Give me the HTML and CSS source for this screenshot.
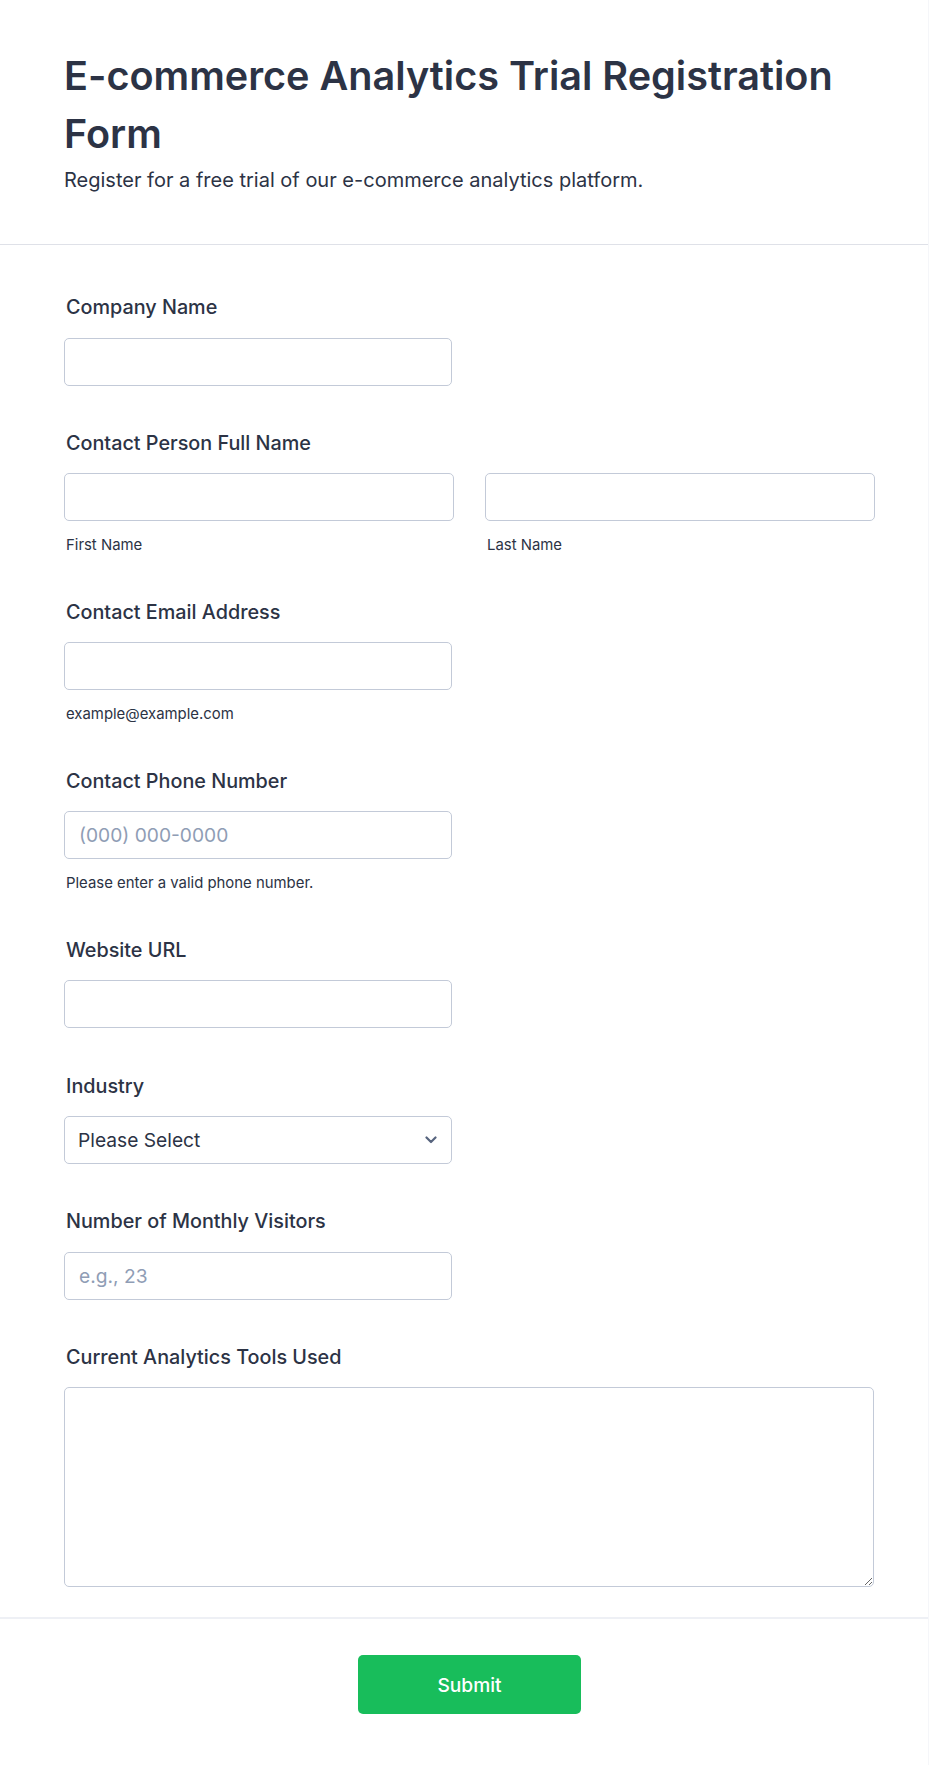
FILE: index.html
```html
<!DOCTYPE html>
<html lang="en">
<head>
<meta charset="utf-8">
<title>E-commerce Analytics Trial Registration Form</title>
<link rel="stylesheet" href="styles.css">
</head>
<body>
<div class="page">
  <header class="form-header">
    <h1 class="title">E-commerce Analytics Trial Registration Form</h1>
    <p class="subtitle">Register for a free trial of our e-commerce analytics platform.</p>
  </header>
  <form class="form-body">
    <div class="field">
      <label class="label">Company Name</label>
      <input class="input half" type="text">
    </div>
    <div class="field">
      <label class="label">Contact Person Full Name</label>
      <div class="name-row">
        <div class="name-col">
          <input class="input" type="text">
          <span class="sublabel">First Name</span>
        </div>
        <div class="name-col">
          <input class="input" type="text">
          <span class="sublabel">Last Name</span>
        </div>
      </div>
    </div>
    <div class="field">
      <label class="label">Contact Email Address</label>
      <input class="input half" type="email">
      <span class="sublabel">example@example.com</span>
    </div>
    <div class="field">
      <label class="label">Contact Phone Number</label>
      <input class="input half" type="tel" placeholder="(000) 000-0000">
      <span class="sublabel">Please enter a valid phone number.</span>
    </div>
    <div class="field">
      <label class="label">Website URL</label>
      <input class="input half" type="text">
    </div>
    <div class="field">
      <label class="label">Industry</label>
      <div class="select-wrap half">
        <div class="select">Please Select</div>
        <svg class="chev" width="12" height="8" viewBox="0 0 12 8"><path d="M1.5 1.5 L6 6 L10.5 1.5" fill="none" stroke="#57647e" stroke-width="2.2" stroke-linecap="round" stroke-linejoin="round"/></svg>
      </div>
    </div>
    <div class="field">
      <label class="label">Number of Monthly Visitors</label>
      <input class="input half" type="text" placeholder="e.g., 23">
    </div>
    <div class="field last">
      <label class="label">Current Analytics Tools Used</label>
      <textarea class="textarea"></textarea>
    </div>
  </form>
  <footer class="form-footer">
    <button class="submit" type="button">Submit</button>
  </footer>
</div>
</body>
</html>
```
FILE: styles.css
```css
* { box-sizing: border-box; }
html, body { margin: 0; padding: 0; background: #ffffff; }
body {
  font-family: Inter, "Noto Sans", "Liberation Sans", sans-serif;
  color: #2c3345;
}
.page {
  width: 929px;
  min-height: 1765px;
  border-right: 1px solid #f5f6f9;
}
.form-header {
  padding: 48px 64px 51px 64px;
  border-bottom: 1px solid #dfe1e8;
}
.title {
  margin: 0;
  font-size: 39.6px;
  line-height: 57.6px;
  font-weight: 600;
  color: #2c3345;
  letter-spacing: 0;
}
.subtitle {
  margin: 4px 0 0 0;
  font-size: 20px;
  line-height: 26px;
  font-weight: 400;
  color: #2c3345;
}
.form-body {
  padding: 48px 54px 30px 64px;
  display: flex;
  flex-direction: column;
  gap: 43.2px;
}
.field {
  display: flex;
  flex-direction: column;
  align-items: flex-start;
}
.label {
  display: block;
  padding-left: 2px;
  font-size: 19.8px;
  line-height: 28.8px;
  font-weight: 500;
  color: #2c3345;
  margin-bottom: 15.6px;
}
.input {
  display: block;
  width: 100%;
  height: 48px;
  border: 1px solid #c3cad8;
  border-radius: 5px;
  background: #fff;
  font-family: inherit;
  font-size: 19.2px;
  color: #2c3345;
  padding: 0 14px;
  outline: none;
}
.input::placeholder { color: #8f9db5; opacity: 1; }
.half { width: 388px; }
.sublabel {
  display: block;
  margin-top: 13.5px;
  padding-left: 2px;
  font-size: 14.9px;
  line-height: 20px;
  color: #2c3345;
}
.name-row {
  display: flex;
  gap: 31px;
  width: 811px;
}
.name-col {
  flex: 1;
  display: flex;
  flex-direction: column;
}
.select-wrap {
  position: relative;
  height: 48px;
  border: 1px solid #c3cad8;
  border-radius: 5px;
  background: #fff;
}
.select {
  padding: 0 13px;
  line-height: 46px;
  font-size: 19.2px;
  color: #2c3345;
}
.chev {
  position: absolute;
  right: 14px;
  top: 19px;
}
.textarea {
  display: block;
  width: 810px;
  height: 200px;
  border: 1px solid #c3cad8;
  border-radius: 5px;
  background: #fff;
  font-family: inherit;
  font-size: 19.2px;
  outline: none;
}
.form-footer {
  border-top: 2px solid #eef0f5;
  padding-top: 36px;
  display: flex;
  justify-content: center;
}
.submit {
  width: 223px;
  height: 59px;
  border: none;
  border-radius: 5px;
  background: #18bd5b;
  color: #ffffff;
  font-family: inherit;
  font-size: 19.2px;
  font-weight: 500;
  margin-left: 11px;
}
```
